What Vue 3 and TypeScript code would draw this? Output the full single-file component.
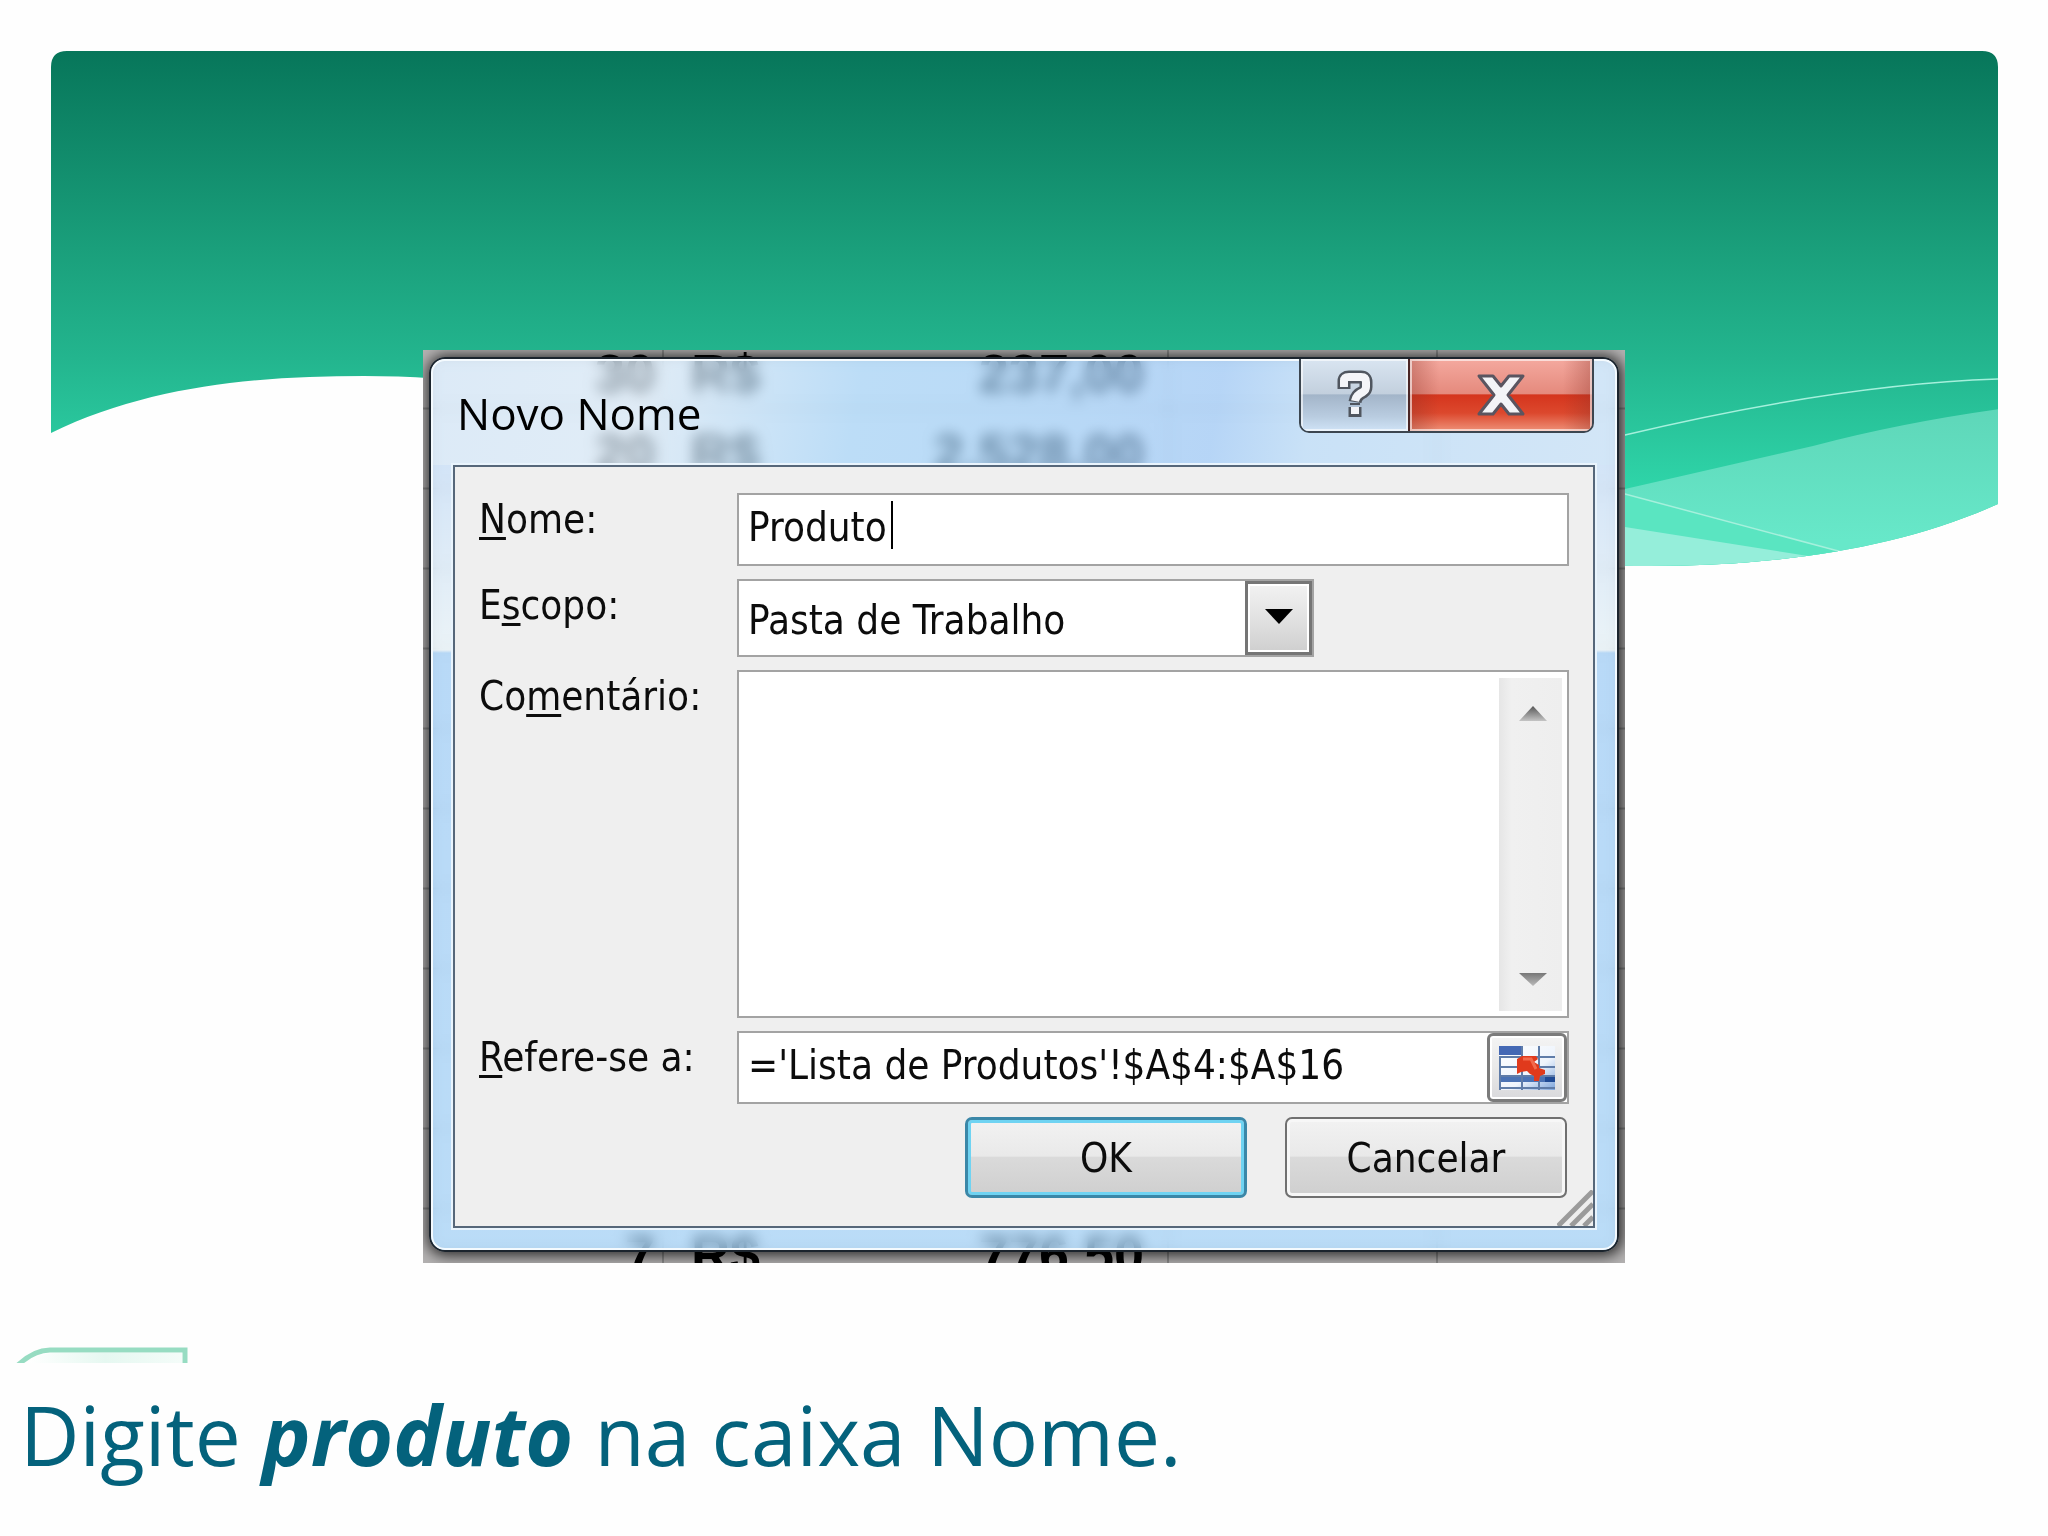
<script setup lang="ts">
import { ref } from 'vue'

interface SheetRow {
  y: number
  qty: string
  price: string
}

const name = ref('Produto')
const scope = ref('Pasta de Trabalho')
const comment = ref('')
const refersTo = ref("='Lista de Produtos'!$A$4:$A$16")

const rows: SheetRow[] = [
  { y: 42, qty: '30', price: '237,00' },
  { y: 122, qty: '20', price: '2.528,00' },
  { y: 923, qty: '7', price: '776,50' },
]
const gridLines: number[] = Array.from({ length: 11 }, (_, i) => 59 + i * 80)
</script>

<template>
  <main class="slide">
    <svg class="banner" viewBox="0 0 2048 620" aria-hidden="true">
      <defs>
        <linearGradient id="green" gradientUnits="userSpaceOnUse" x1="0" y1="51" x2="0" y2="490">
          <stop offset="0" stop-color="#07765a" />
          <stop offset="0.45" stop-color="#1a9f7b" />
          <stop offset="0.7" stop-color="#23b58e" />
          <stop offset="1" stop-color="#2fd5a9" />
        </linearGradient>
        <linearGradient id="mint" gradientUnits="userSpaceOnUse" x1="0" y1="405" x2="0" y2="540">
          <stop offset="0" stop-color="#5ed6b8" />
          <stop offset="1" stop-color="#67e8c9" />
        </linearGradient>
        <clipPath id="wave">
          <path d="M51 67Q51 51 67 51H1982Q1998 51 1998 67V504C1900 548 1780 566 1650 566C1300 566 700 376 364 376C260 376 150 385 51 433Z" />
        </clipPath>
      </defs>
      <g clip-path="url(#wave)">
        <rect width="2048" height="620" fill="url(#green)" />
        <path d="M1560 505L1625 489L1813 446Q1900 423 2000 409V620H1560Z" fill="url(#mint)" />
        <path d="M1560 475L1625 494L1840 551V620H1560Z" fill="#5ae5c1" />
        <path d="M1560 517L1625 527L1808 556V620H1560Z" fill="#95eeda" />
        <path d="M1560 452L1625 435Q1840 384 2000 379" class="hairline" />
        <path d="M1560 477L1625 494L1842 552" class="hairline" />
      </g>
    </svg>

    <section class="shot">
      <svg class="sheet" viewBox="0 0 1202 914" preserveAspectRatio="xMidYMid slice" aria-hidden="true">
        <path v-for="y in gridLines" :key="y" :d="`M0 ${y}H1202`" class="rule" />
        <path d="M240 0V914M745 0V914M1014 0V914" class="rule" />
        <g v-for="row in rows" :key="row.y" class="cells">
          <text x="232" :y="row.y" text-anchor="end">{{ row.qty }}</text>
          <text x="268" :y="row.y">R$</text>
          <text x="721" :y="row.y" text-anchor="end">{{ row.price }}</text>
        </g>
      </svg>

      <form class="window" aria-labelledby="dialog-title" @submit.prevent>
        <header class="titlebar">
          <h1 id="dialog-title">Novo Nome</h1>
          <div class="caption-buttons">
            <button type="button" class="help" aria-label="Ajuda">
              <svg width="36" height="50" viewBox="0 0 36 50">
                <path d="M7 19V11Q7 7 12 7H24Q29 7 29 12V17Q29 20 26 22Q19 25 18 32M18 37V47" class="q-edge" />
                <path d="M7 17V11Q7 7 12 7H24Q29 7 29 12V17Q29 20 26 22Q19 25 18 31M18 37V44" class="q-fill" />
                <path d="M13 34H23" class="q-gap" />
              </svg>
            </button>
            <button type="button" class="close" aria-label="Fechar">
              <svg width="50" height="44" viewBox="0 0 50 44">
                <path d="M3 3H17L25 13L33 3H47L32 22L47 41H33L25 31L17 41H3L18 22Z" class="x-shape" />
              </svg>
            </button>
          </div>
        </header>

        <div class="client">
          <label for="name"><u>N</u>ome:</label>
          <div class="box">
            <input id="name" v-model="name" type="text" />
            <span class="caret"></span>
          </div>

          <label for="scope">E<u>s</u>copo:</label>
          <div class="box scope">
            <select id="scope" v-model="scope">
              <option>Pasta de Trabalho</option>
            </select>
            <span class="drop">
              <svg width="28" height="15" viewBox="0 0 28 15"><path d="M0 0H28L14 15Z" /></svg>
            </span>
          </div>

          <label for="comment">Co<u>m</u>entário:</label>
          <div class="box comment">
            <textarea id="comment" v-model="comment"></textarea>
            <div class="scroll">
              <button type="button" aria-label="Rolar para cima">
                <svg width="28" height="15" viewBox="0 0 28 15">
                  <defs>
                    <linearGradient id="up" x1="0" y1="0" x2="0" y2="1">
                      <stop offset="0" stop-color="#555" />
                      <stop offset="1" stop-color="#c4c4c4" />
                    </linearGradient>
                  </defs>
                  <path d="M14 0L28 15H0Z" fill="url(#up)" />
                </svg>
              </button>
              <button type="button" aria-label="Rolar para baixo">
                <svg width="28" height="13" viewBox="0 0 28 13">
                  <defs>
                    <linearGradient id="down" x1="0" y1="0" x2="0" y2="1">
                      <stop offset="0" stop-color="#777" />
                      <stop offset="1" stop-color="#bbb" />
                    </linearGradient>
                  </defs>
                  <path d="M0 0H28L14 13Z" fill="url(#down)" />
                </svg>
              </button>
            </div>
          </div>

          <label for="refers"><u>R</u>efere-se a:</label>
          <div class="box">
            <input id="refers" v-model="refersTo" type="text" />
            <button type="button" class="picker" aria-label="Selecionar intervalo">
              <svg width="56" height="44" viewBox="0 0 56 44">
                <defs>
                  <linearGradient id="cells" x1="0" y1="0" x2="1" y2="1">
                    <stop offset="0" stop-color="#ffffff" />
                    <stop offset="0.6" stop-color="#eef4fc" />
                    <stop offset="1" stop-color="#7fa6dc" />
                  </linearGradient>
                </defs>
                <rect width="56" height="44" fill="url(#cells)" />
                <rect width="23" height="9" fill="#4468b4" />
                <rect y="31" width="56" height="5" fill="#4a72b4" />
                <rect x="46" y="31" width="10" height="5" fill="#1f4a94" />
                <path d="M0 11H56M0 21H56M0 30H56M0 42H56M1 10V44M23 0V44M40 0V44" class="cell-lines" />
                <path d="M18 13L23 10H37L39 13L35 16L40 19V22L46 24V28L41 30L40 35H35V30L31 28L28 25L22 26L18 28Z" fill="#e03a1c" />
                <path d="M24 13H32L37 23" class="arrow-light" />
              </svg>
            </button>
          </div>

          <div class="actions">
            <button type="submit" class="action primary">OK</button>
            <button type="button" class="action">Cancelar</button>
          </div>

          <svg class="grip" width="36" height="36" viewBox="0 0 36 36" aria-hidden="true">
            <path d="M1 36L36 1M14 36L36 14M27 36L36 27" />
          </svg>
        </div>
      </form>
    </section>

    <svg class="tab" width="190" height="16" viewBox="0 0 190 16" aria-hidden="true">
      <defs>
        <linearGradient id="tabfill" x1="0" y1="0" x2="1" y2="0">
          <stop offset="0" stop-color="#ffffff" />
          <stop offset="0.5" stop-color="#e6f8f1" />
          <stop offset="1" stop-color="#f4fcf9" />
        </linearGradient>
      </defs>
      <path d="M28 16Q40 6 54 6H182V16Z" fill="url(#tabfill)" />
      <path d="M18 18Q34 3 50 3H185V18" class="tab-line" />
    </svg>
    <p class="caption">Digite <em>produto</em> na caixa Nome.</p>
  </main>
</template>

<style>
body {
  margin: 0;
  background: #fefefe;
}
</style>

<style scoped>
.slide {
  position: relative;
  display: flex;
  flex-direction: column;
  min-height: 100vh;
  box-sizing: border-box;
  padding-top: 350px;
  overflow: hidden;
  font-family: 'Open Sans', 'Noto Sans', sans-serif;
}
.banner {
  position: absolute;
  top: 0;
  left: 0;
  width: 100%;
}
.hairline {
  fill: none;
  stroke: #a5f0dc;
  stroke-width: 1.5;
}

.shot {
  position: relative;
  box-sizing: border-box;
  width: 100%;
  max-width: 1202px;
  margin: 0 auto;
  padding: 7px 6px 11px;
  overflow: hidden;
  background: #b4b2b2;
}
.sheet {
  position: absolute;
  top: 0;
  left: 0;
  width: 100%;
  height: 100%;
}
.rule {
  stroke: #8c8c8c;
  stroke-width: 2;
}
.cells {
  font: bold 54px 'Liberation Sans', sans-serif;
  fill: #000;
}

/* Translucent frame: the sheet behind shows through, blurred */
.window {
  position: relative;
  overflow: hidden;
  border: 2px solid #1b242d;
  border-radius: 16px;
  padding: 0 20px 20px;
  background:
    linear-gradient(100deg, #d4ebffa6 0, #dbefffa6 18%, #a3d7ffa6 36%, #9ed1ffa6 55%, #9acbfea6 66%, #b7deffa6 74%, #c6e5ffa6 100%) 0 0 / 100% 106px no-repeat,
    linear-gradient(#c6e2ffa6, #ebf9ffa6 185px, #9dd1ffa6 188px, #a1d6ffa6) 0 106px / 100% 100% no-repeat;
  backdrop-filter: blur(7px) brightness(1.3);
  box-shadow: 1px 1px 14px 3px rgba(0, 0, 0, 0.75);
}
.window::after {
  content: '';
  position: absolute;
  inset: 0;
  border: 2px solid #f4fafe;
  border-radius: 14px;
  pointer-events: none;
}

.titlebar {
  position: relative;
  z-index: 1;
  display: flex;
  justify-content: space-between;
  align-items: flex-start;
  height: 104px;
}
.titlebar h1 {
  margin: 24px 0 0 6px;
  font-size: 44px;
  line-height: 60px;
  font-weight: 400;
  color: #000;
}
.caption-buttons {
  display: flex;
  margin-right: 3px;
  border: 2px solid #3c4650;
  border-top: 0;
  border-radius: 0 0 10px 10px;
  overflow: hidden;
}
.caption-buttons button {
  display: grid;
  place-items: center;
  height: 72px;
  padding: 0;
  border: 0;
  box-shadow: inset 0 0 0 2px rgba(255, 255, 255, 0.6);
}
.help {
  width: 107px;
  background: linear-gradient(#d9e5f1, #c3d0de 48%, #a3b5c9 50%, #b9cce0 80%, #cfe3f6);
}
.caption-buttons .close {
  width: 184px;
  border-left: 2px solid #4a2626;
  background:
    linear-gradient(90deg, rgba(140, 50, 40, 0.35), transparent 16%, transparent 84%, rgba(140, 50, 40, 0.35)),
    linear-gradient(#f4a99f, #e58a7d 48%, #d5351d 50%, #dc482d 75%, #ee9078);
}
.q-edge,
.q-fill {
  fill: none;
  stroke: #50565f;
  stroke-width: 13;
  stroke-linejoin: round;
}
.q-fill {
  stroke: #f4f5f8;
  stroke-width: 8;
}
.q-gap {
  stroke: #50565f;
  stroke-width: 2;
}
.x-shape {
  fill: #f3f4f7;
  stroke: #5a5560;
  stroke-width: 3;
  stroke-linejoin: round;
}

.client {
  position: relative;
  z-index: 1;
  display: grid;
  grid-template-columns: 258px 1fr;
  row-gap: 13px;
  margin: 2px;
  padding: 26px 24px 28px;
  border: 2px solid #56677a;
  background: #efefef;
  box-shadow: 0 0 0 2px #e9f4fd;
}
.client,
.client input,
.client select,
.client textarea,
.client button {
  font-family: 'DejaVu Sans Condensed', 'Open Sans', sans-serif;
  font-size: 40px;
  color: #0c0c0c;
}
.client label {
  padding-top: 2px;
  line-height: 48px;
  white-space: nowrap;
}
.client u {
  text-decoration-thickness: 3px;
  text-underline-offset: 4px;
  text-decoration-skip-ink: none;
}
.box {
  position: relative;
  display: flex;
  box-sizing: border-box;
  height: 73px;
  border: 2px solid #a3a3a3;
  background: #fff;
}
.box input,
.box select,
.box textarea {
  flex: 1;
  min-width: 0;
  box-sizing: border-box;
  margin: 0;
  border: 0;
  outline: 0;
  background: transparent;
  padding: 0 9px 6px;
}
.caret {
  position: absolute;
  top: 6px;
  left: 152px;
  width: 2px;
  height: 48px;
  background: #000;
}
.scope {
  width: 577px;
  max-width: 100%;
  height: 78px;
}
.box select {
  appearance: none;
  padding: 4px 70px 0 9px;
}
.drop {
  position: absolute;
  inset: 0 0 0 auto;
  display: grid;
  place-items: center;
  box-sizing: border-box;
  width: 67px;
  border: 3px solid #757575;
  background: linear-gradient(#f2f2f2, #e2e2e2 50%, #cfcfcf);
  box-shadow: inset 0 0 0 2px #fff;
  pointer-events: none;
}
.drop svg {
  margin-bottom: 4px;
}
.comment {
  height: 348px;
}
.box textarea {
  resize: none;
}
.scroll {
  display: flex;
  flex-direction: column;
  justify-content: space-between;
  width: 63px;
  margin: 6px 5px 5px 0;
  background: linear-gradient(90deg, #e6e6e6, #f0f0f0 20%, #eeeeee);
}
.scroll button {
  display: grid;
  place-items: center;
  height: 64px;
  padding: 6px 0 0 4px;
  border: 0;
  background: none;
}
.scroll button:last-child {
  padding-top: 0;
}
.picker {
  display: grid;
  place-items: center;
  width: 80px;
  margin: 0;
  padding: 0;
  border: 3px solid #7b7b7b;
  border-radius: 6px;
  background: linear-gradient(#f4f4f4, #e9e9e9 50%, #d9d9dc);
  box-shadow: inset 0 0 0 2px #fff;
}
.cell-lines {
  fill: none;
  stroke: #5f7ca8;
  stroke-width: 2;
}
.arrow-light {
  fill: none;
  stroke: #f26a4c;
  stroke-width: 3;
}

.actions {
  grid-column: 1 / -1;
  display: flex;
  justify-content: flex-end;
  gap: 38px;
  padding-right: 2px;
}
.action {
  width: 282px;
  height: 81px;
  padding: 0;
  border: 2px solid #707070;
  border-radius: 7px;
  background: linear-gradient(#f2f2f2, #e9e9e9 48%, #dadada 50%, #cfcfcf);
  box-shadow: inset 0 0 0 3px #f7f7f7;
}
.primary {
  border: 3px solid #3a87a8;
  box-shadow: inset 0 0 0 3px #6fd3f2;
}
.grip {
  position: absolute;
  right: 0;
  bottom: 0;
}
.grip path {
  fill: none;
  stroke: #9b9b9b;
  stroke-width: 5;
}

.tab {
  display: block;
  margin-top: 84px;
}
.tab-line {
  fill: none;
  stroke: #97dcc2;
  stroke-width: 5;
}
.caption {
  margin: 16px 0 0;
  padding: 0 20px;
  font-size: 82px;
  line-height: 110px;
  color: #04627c;
}
.caption em {
  font-weight: 700;
}
</style>
